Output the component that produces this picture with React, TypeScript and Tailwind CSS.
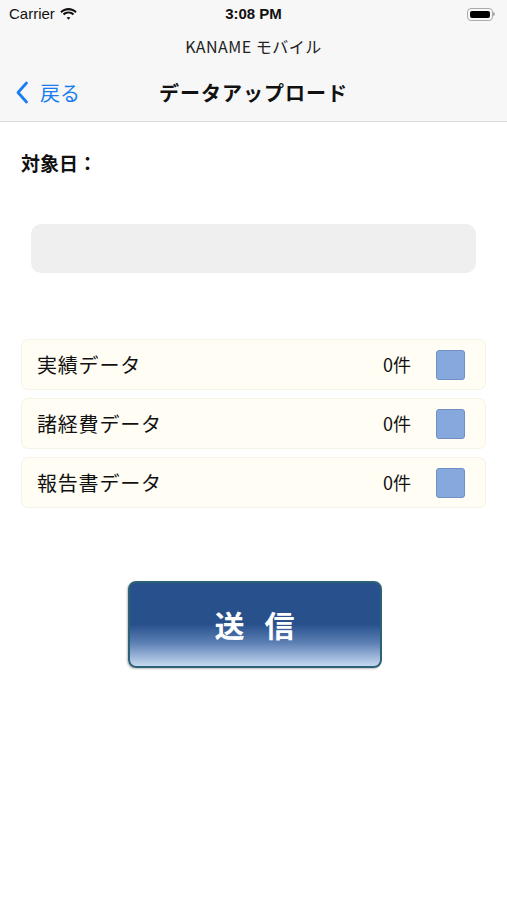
import React from "react";

const rows = ["実績データ", "諸経費データ", "報告書データ"];

const jp = { fontFamily: '"Noto Sans CJK JP", "Noto Sans", sans-serif' };

const App = () => {
  return (
    <div className="w-[507px] h-[900px] bg-white flex flex-col" style={jp}>
      {/* header */}
      <div className="bg-[#f7f7f7] border-b border-[#dcdcdc] h-[122px] flex flex-col">
        <div className="h-[28px] flex items-center justify-between px-[9px] text-[15px] text-[#111]">
          <div className="flex items-center gap-[5px] w-[120px]">
            <span style={{ fontFamily: '"Liberation Sans", sans-serif' }}>Carrier</span>
            <svg width="17" height="12" viewBox="0 0 17 12">
              <path d="M8.5 2.2c2.6 0 5 1 6.8 2.7l1.4-1.5C14.5 1.3 11.6 0 8.5 0S2.5 1.3.3 3.4l1.4 1.5C3.5 3.2 5.9 2.2 8.5 2.2z" fill="#111" />
              <path d="M8.5 5.6c1.6 0 3.1.6 4.3 1.7l1.4-1.5C12.7 4.3 10.7 3.5 8.5 3.5S4.3 4.3 2.8 5.8l1.4 1.5C5.4 6.2 6.9 5.6 8.5 5.6z" fill="#111" />
              <path d="M8.5 8.9c.8 0 1.4.3 1.9.7l-1.9 2.2-1.9-2.2c.5-.4 1.1-.7 1.9-.7z" fill="#111" />
            </svg>
          </div>
          <span className="font-semibold text-[15px]" style={{ fontFamily: '"Liberation Sans", sans-serif' }}>3:08 PM</span>
          <div className="w-[120px] flex justify-end pr-[3px]">
            <div className="flex items-center">
              <div className="w-[26px] h-[13px] rounded-[4px] border border-[#aaa] p-[2px]">
                <div className="w-full h-full bg-black rounded-[2px]" />
              </div>
              <div className="w-[2px] h-[4px] bg-[#aaa] rounded-r-sm" />
            </div>
          </div>
        </div>
        <div className="h-[36px] flex items-center justify-center text-[16px] tracking-[0.5px] text-[#222]">
          KANAME モバイル
        </div>
        <div className="relative flex-1 flex items-center justify-center">
          <div className="absolute left-[15px] top-0 bottom-0 flex items-center gap-[11px] text-[#1a7ef0]">
            <svg width="14" height="23" viewBox="0 0 14 23">
              <path d="M11.5 2 L3 11.5 L11.5 21" fill="none" stroke="#1a7ef0" strokeWidth="2.8" strokeLinecap="round" strokeLinejoin="round" />
            </svg>
            <span className="text-[20px]">戻る</span>
          </div>
          <span className="text-[20px] font-semibold tracking-[1px] text-[#111]">データアップロード</span>
        </div>
      </div>

      {/* body */}
      <div className="flex flex-col px-[21px]">
        <div className="pt-[27px] text-[19px] font-semibold text-[#111] leading-[28px]">対象日：</div>
        <div className="mt-[47px] mx-[10px] h-[49px] rounded-[10px] bg-[#efefef]" />
        <div className="mt-[66px] flex flex-col gap-[8px]">
          {rows.map((r) => (
            <div
              key={r}
              className="h-[51px] rounded-[7px] bg-[#fffdf4] border border-[#f5f2e6] flex items-center pl-[15px] pr-[20px]"
            >
              <span className="flex-1 text-[20px] tracking-[0.8px] text-[#111]">{r}</span>
              <span className="text-[18px] text-[#111] mr-[25px]">0件</span>
              <div className="w-[29px] h-[30px] rounded-[3px] bg-[#87a8dc] border border-[#6f90c6]" />
            </div>
          ))}
        </div>
        <div className="mt-[73px] flex justify-center">
          <button
            className="w-[254px] h-[87px] ml-[2px] rounded-[8px] border-2 border-[#2d6276] bg-[linear-gradient(to_bottom,#27508c_0%,#28518c_50%,#5c7fb4_72%,#c6d9f1_100%)] shadow-[-1px_1px_2px_rgba(0,0,0,0.25)] text-white text-[30px] font-semibold tracking-[20px] pl-[20px]"
          >
            送信
          </button>
        </div>
      </div>
    </div>
  );
};

export default App;
